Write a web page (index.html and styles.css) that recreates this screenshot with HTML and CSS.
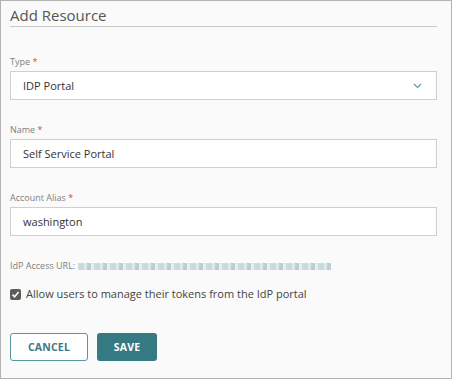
FILE: index.html
```html
<!DOCTYPE html>
<html lang="en">
<head>
  <meta charset="UTF-8">
  <title>Add Resource</title>
  <link rel="stylesheet" href="styles.css">
</head>
<body>
  <div class="panel">
    <h2 class="panel-title">Add Resource</h2>

    <form class="resource-form">
      <!-- Type -->
      <div class="field">
        <label class="field-label">Type <span class="req">*</span></label>
        <div class="select-box">
          <span>IDP Portal</span>
          <svg class="chevron" width="9" height="6" viewBox="0 0 9 6">
            <path d="M1 1 L4.5 4.5 L8 1" fill="none" stroke="#5a9aa6" stroke-width="1.2"/>
          </svg>
        </div>
      </div>

      <!-- Name -->
      <div class="field">
        <label class="field-label">Name <span class="req">*</span></label>
        <div class="text-box">Self Service Portal</div>
      </div>

      <!-- Account Alias -->
      <div class="field">
        <label class="field-label">Account Alias <span class="req">*</span></label>
        <div class="text-box">washington</div>
      </div>

      <div class="url-row">
        <span class="field-label">IdP Access URL:</span>
        <span class="url-blur" aria-label="hidden URL"></span>
      </div>

      <div class="check-row">
        <span class="check-box">
          <svg width="9" height="9" viewBox="0 0 9 9">
            <path d="M1.5 4.6 L3.6 6.7 L7.6 2" fill="none" stroke="#fff" stroke-width="1.6"/>
          </svg>
        </span>
        <span>Allow users to manage their tokens from the IdP portal</span>
      </div>

      <div class="actions">
        <button type="button" class="btn btn-cancel">Cancel</button>
        <button type="button" class="btn btn-save">Save</button>
      </div>
    </form>
  </div>
</body>
</html>
```

FILE: styles.css
```css
body {
  margin: 0;
  font-family: "Open Sans", "Liberation Sans", sans-serif;
  color: #333;
}
.panel {
  box-sizing: border-box;
  width: 452px;
  height: 379px;
  border: 1px solid #b3b3b3;
  background-color: #fafafa;
  padding: 3px 14px 0 9px;
}
.panel-title {
  margin: 0;
  font-size: 15px;
  font-weight: 400;
  line-height: 22px;
  color: #555;
  border-bottom: 1px solid #c8c8c8;
}
.resource-form {
  margin-top: 28px;
}
.field {
  margin-bottom: 23px;
}
.field-label {
  display: block;
  font-size: 9px;
  line-height: 14px;
  color: #808080;
  margin-bottom: 2px;
}
.req {
  color: #e0433c;
}
.select-box, .text-box {
  box-sizing: border-box;
  height: 29px;
  border: 1px solid #cfcfcf;
  background-color: #fff;
  padding: 0 12px;
  font-size: 11px;
  line-height: 27px;
  color: #333;
}
.select-box {
  display: flex;
  justify-content: space-between;
  align-items: center;
}
.chevron {
  margin-right: 2px;
}
.url-row {
  display: flex;
  align-items: center;
  gap: 3px;
}
.url-row .field-label {
  display: inline;
  margin: 0;
}
.url-blur {
  display: inline-block;
  width: 253px;
  height: 7px;
  margin-top: 1px;
  background: repeating-linear-gradient(90deg, #c9dbe0 0 6px, #dde9ec 6px 9px, #b9cfd5 9px 13px, #e4eef0 13px 16px);
}
.check-row {
  display: flex;
  align-items: center;
  gap: 5px;
  margin-top: 12px;
  font-size: 11px;
  line-height: 18px;
  color: #444;
}
.check-box {
  display: flex;
  align-items: center;
  justify-content: center;
  width: 11px;
  height: 11px;
  border-radius: 2px;
  background-color: #5c5c5c;
}
.actions {
  display: flex;
  gap: 9px;
  margin-top: 30px;
}
.btn {
  box-sizing: border-box;
  height: 28px;
  border-radius: 3px;
  font-family: "Open Sans", sans-serif;
  font-size: 10.5px;
  font-weight: 700;
  text-transform: uppercase;
  letter-spacing: 0.2px;
  cursor: pointer;
}
.btn-cancel {
  width: 78px;
  border: 1px solid #5a96a0;
  background-color: #fff;
  color: #3d7883;
}
.btn-save {
  width: 60px;
  border: none;
  background-color: #357982;
  color: #fff;
}
```
